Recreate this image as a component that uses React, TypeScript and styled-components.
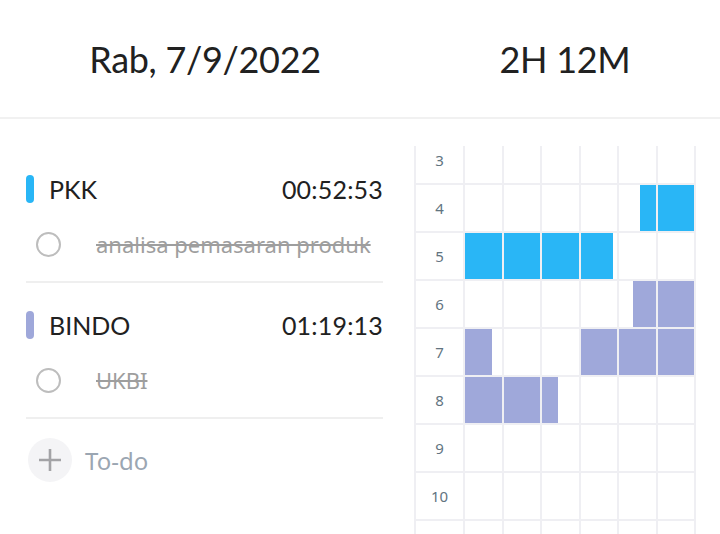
import React, { useLayoutEffect, useRef } from "react";
import styled, { createGlobalStyle } from "styled-components";

const GlobalStyle = createGlobalStyle`
  html, body { margin: 0; padding: 0; background: #ffffff; }
  body { font-family: "Noto Sans", "Open Sans", sans-serif; }
  * { box-sizing: border-box; }
`;

const BLUE = "#29b6f6";
const PURPLE = "#9fa8da";

const Page = styled.div`
  width: 720px;
  height: 534px;
  overflow: hidden;
  display: flex;
  flex-direction: column;
  background: #fff;
`;

const Header = styled.header`
  display: flex;
  height: 119px;
  flex-shrink: 0;
  border-bottom: 2px solid #f1f1f1;
`;

const HeaderCell = styled.div<{ $width?: number }>`
  ${(p) => (p.$width ? `width: ${p.$width}px;` : "flex: 1;")}
  display: flex;
  align-items: center;
  justify-content: center;
  padding-right: 4px;
  font-family: Lato, "Noto Sans", sans-serif;
  font-size: 36px;
  color: #212121;
  letter-spacing: -0.3px;
`;

const Body = styled.main`
  display: flex;
  flex: 1;
  min-height: 0;
`;

const LeftPanel = styled.section`
  width: 414px;
  flex-shrink: 0;
  padding: 28px 31px 0 26px;
`;

const ProjectSection = styled.div`
  border-bottom: 2px solid #efefef;
  padding-bottom: 14px;
`;

const ProjectRow = styled.div`
  margin-top: 22px;
  height: 40px;
  display: flex;
  align-items: center;
  font-family: Lato, "Noto Sans", sans-serif;
  font-size: 25px;
  color: #212121;
`;

const ColorBar = styled.span<{ $color: string }>`
  width: 8px;
  height: 28px;
  border-radius: 4px;
  background: ${(p) => p.$color};
  margin-right: 15px;
  flex-shrink: 0;
`;

const ProjectName = styled.span`
  flex: 1;
`;

const Duration = styled.span`
  letter-spacing: 0.2px;
`;

const TaskRow = styled.div`
  margin-top: 12px;
  height: 46px;
  display: flex;
  align-items: center;
  padding-left: 10px;
`;

const Check = styled.span`
  width: 25px;
  height: 25px;
  border-radius: 50%;
  border: 2px solid #bdbdbd;
  flex-shrink: 0;
`;

const TaskText = styled.span`
  margin-left: 35px;
  font-family: "Noto Sans", sans-serif;
  font-size: 22px;
  color: #9e9e9e;
  text-decoration: line-through;
  text-decoration-thickness: 1.5px;
`;

const AddRow = styled.div`
  margin-top: 19px;
  height: 44px;
  display: flex;
  align-items: center;
  padding-left: 2px;
`;

const AddButton = styled.span`
  width: 44px;
  height: 44px;
  border-radius: 50%;
  background: #f4f4f6;
  display: flex;
  align-items: center;
  justify-content: center;
  flex-shrink: 0;
`;

const AddLabel = styled.span`
  margin-left: 13px;
  font-family: "Noto Sans", sans-serif;
  font-size: 24px;
  color: #9ba6b2;
`;

const RightPanel = styled.section`
  flex: 1;
  padding: 27px 24px 0 0;
  display: flex;
  flex-direction: column;
  min-height: 0;
`;

const ScrollArea = styled.div`
  flex: 1;
  overflow: hidden;
`;

const TimeGrid = styled.div`
  display: grid;
  grid-template-columns: 47px repeat(6, 1fr);
  grid-auto-rows: 46px;
  gap: 2px;
  padding: 0 2px 2px;
  background: #efeff3;
  width: 282px;
`;

const HourLabel = styled.div`
  background: #fff;
  display: flex;
  align-items: center;
  justify-content: center;
  font-family: "Noto Sans", sans-serif;
  font-size: 15px;
  color: #62747f;
`;

const Slot = styled.div`
  background: #fff;
  position: relative;
`;

const Block = styled.span<{ $color: string }>`
  position: absolute;
  top: 0;
  bottom: 0;
  background: ${(p) => p.$color};
`;

type Seg = { from: number; to: number; color: string };

// the last row scrolls out of view, so its label is not rendered
const HOURS: { hour: number; label: string }[] = [3, 4, 5, 6, 7, 8, 9, 10, 11].map((h) => ({
  hour: h,
  label: h <= 10 ? String(h) : "",
}));

const full = (color: string): Seg => ({ from: 0, to: 1, color });

const SCHEDULE: Record<number, Record<number, Seg>> = {
  4: { 4: { from: 0.58, to: 1, color: BLUE }, 5: full(BLUE) },
  5: { 0: full(BLUE), 1: full(BLUE), 2: full(BLUE), 3: { from: 0, to: 0.9, color: BLUE } },
  6: { 4: { from: 0.38, to: 1, color: PURPLE }, 5: full(PURPLE) },
  7: { 0: { from: 0, to: 0.75, color: PURPLE }, 3: full(PURPLE), 4: full(PURPLE), 5: full(PURPLE) },
  8: { 0: full(PURPLE), 1: full(PURPLE), 2: { from: 0, to: 0.45, color: PURPLE } },
};

const PROJECTS = [
  { name: "PKK", time: "00:52:53", color: BLUE, task: "analisa pemasaran produk" },
  { name: "BINDO", time: "01:19:13", color: PURPLE, task: "UKBI" },
];

const PlusIcon = () => (
  <svg width="24" height="24" viewBox="0 0 24 24" aria-hidden="true">
    <path d="M12 1v22M1 12h22" stroke="#a3a3a6" strokeWidth="2.6" fill="none" />
  </svg>
);

export default function App() {
  const scrollRef = useRef<HTMLDivElement>(null);
  useLayoutEffect(() => {
    if (scrollRef.current) scrollRef.current.scrollTop = 9;
  }, []);

  return (
    <Page>
      <GlobalStyle />
      <Header>
        <HeaderCell $width={414}>Rab, 7/9/2022</HeaderCell>
        <HeaderCell>2H 12M</HeaderCell>
      </Header>
      <Body>
        <LeftPanel>
          {PROJECTS.map((p) => (
            <ProjectSection key={p.name}>
              <ProjectRow>
                <ColorBar $color={p.color} />
                <ProjectName>{p.name}</ProjectName>
                <Duration>{p.time}</Duration>
              </ProjectRow>
              <TaskRow>
                <Check />
                <TaskText>{p.task}</TaskText>
              </TaskRow>
            </ProjectSection>
          ))}
          <AddRow>
            <AddButton>
              <PlusIcon />
            </AddButton>
            <AddLabel>To-do</AddLabel>
          </AddRow>
        </LeftPanel>
        <RightPanel>
          <ScrollArea ref={scrollRef}>
            <TimeGrid>
              {HOURS.map(({ hour, label }) => (
                <React.Fragment key={hour}>
                  <HourLabel>{label}</HourLabel>
                  {[0, 1, 2, 3, 4, 5].map((c) => {
                    const seg = SCHEDULE[hour]?.[c];
                    return (
                      <Slot key={c}>
                        {seg && (
                          <Block
                            $color={seg.color}
                            style={{ left: `${seg.from * 100}%`, right: `${(1 - seg.to) * 100}%` }}
                          />
                        )}
                      </Slot>
                    );
                  })}
                </React.Fragment>
              ))}
            </TimeGrid>
          </ScrollArea>
        </RightPanel>
      </Body>
    </Page>
  );
}
